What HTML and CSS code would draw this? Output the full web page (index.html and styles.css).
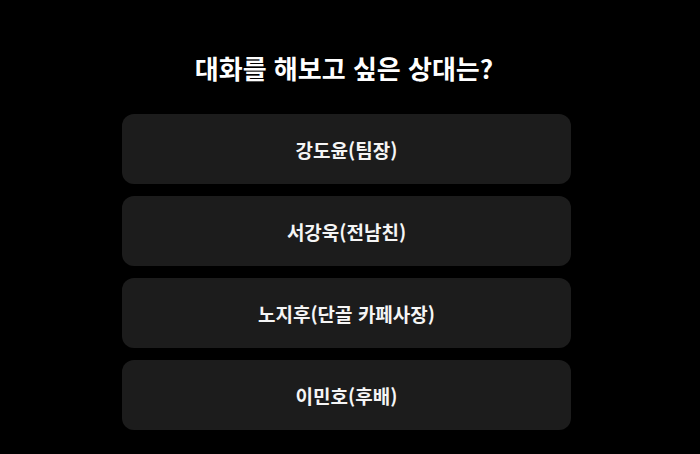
FILE: index.html
```html
<!DOCTYPE html>
<html lang="ko">
  <head>
    <meta charset="UTF-8" />
    <meta name="viewport" content="width=device-width, initial-scale=1.0" />
    <title>대화 상대 선택</title>
    <link rel="stylesheet" href="styles.css">
  </head>
  <body>
    <div class="container">
      <h1 class="question">대화를 해보고 싶은 상대는?</h1>

      <div class="choices">
        <button class="choice">강도윤(팀장)</button>
        <button class="choice">서강욱(전남친)</button>
        <button class="choice">노지후(단골 카페사장)</button>
        <button class="choice">이민호(후배)</button>
      </div>
    </div>
  </body>
</html>
```

FILE: styles.css
```css
body {
  margin: 0;
  background: #000;
  color: #fff;
  font-family: "Noto Sans CJK KR", "Noto Sans", sans-serif;
}
.container {
  width: 449px;
  margin-left: 122px;
  padding-top: 50px;
}
.question {
  margin: 0 0 28px;
  padding-right: 5px;
  font-size: 26px;
  line-height: 36px;
  font-weight: 700;
  text-align: center;
}
.choices {
  display: flex;
  flex-direction: column;
  gap: 12px;
}
.choice {
  height: 70px;
  border: none;
  border-radius: 12px;
  background: #1c1c1c;
  color: #f5f5f5;
  font-family: inherit;
  font-size: 19px;
  font-weight: 700;
  cursor: pointer;
}
```
